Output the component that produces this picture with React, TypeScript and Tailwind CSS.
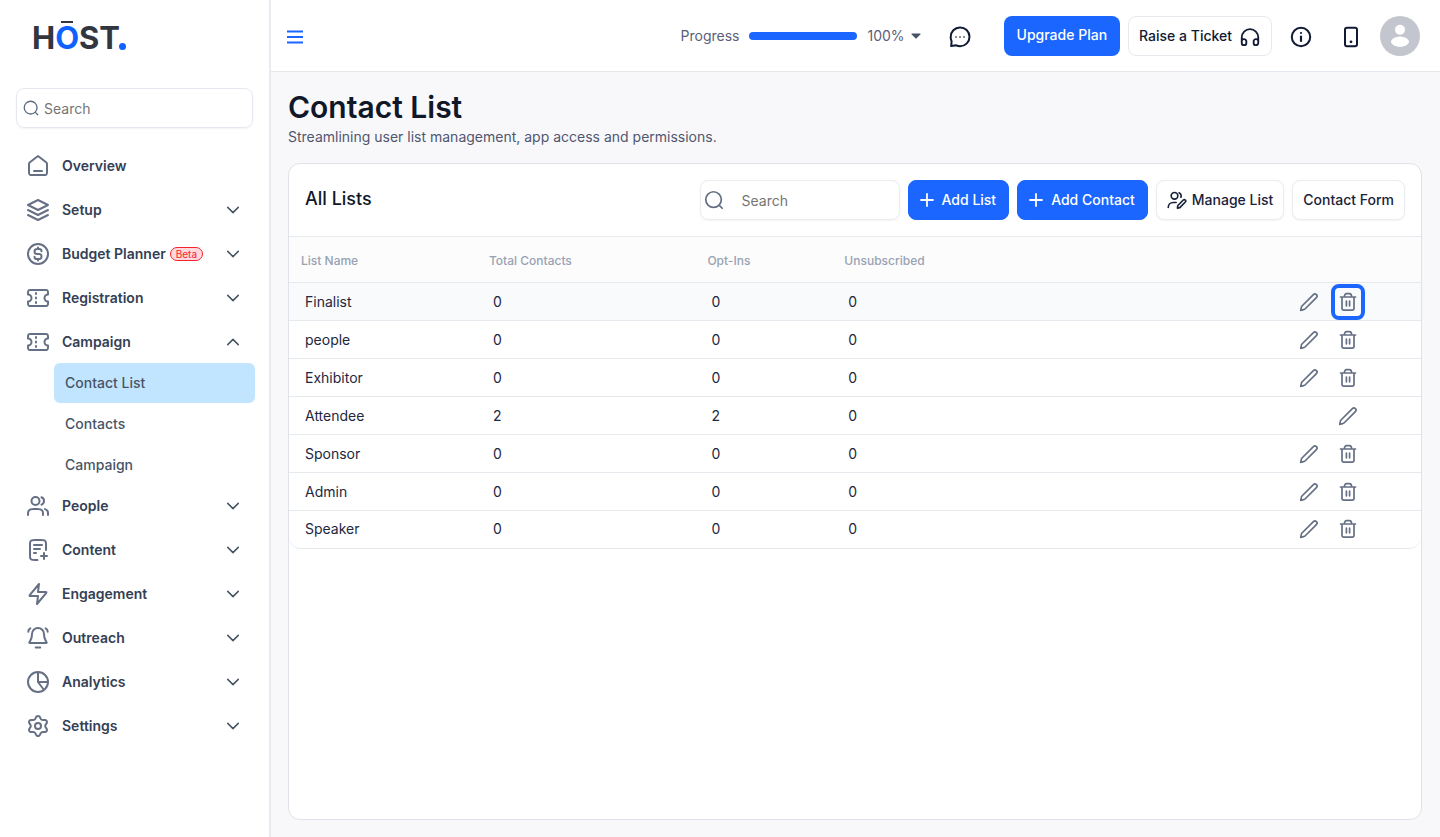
import React, { FC, ReactNode, SVGProps } from "react";

import clsx from "clsx";

const Icon: FC<SVGProps<SVGSVGElement>> = ({ children, ...rest }) => (
  <svg
    viewBox="0 0 24 24"
    fill="none"
    stroke="currentColor"
    strokeWidth={2}
    strokeLinecap="round"
    strokeLinejoin="round"
    aria-hidden="true"
    {...rest}
  >
    {children}
  </svg>
);

const paths = {
  home: "M8 17H16M11.0177 2.764L4.23539 8.03912C3.78202 8.39175 3.55534 8.56806 3.39203 8.78886C3.24737 8.98444 3.1396 9.20478 3.07403 9.43905C3 9.70352 3 9.9907 3 10.5651V17.8C3 18.9201 3 19.4801 3.21799 19.908C3.40973 20.2843 3.71569 20.5903 4.09202 20.782C4.51984 21 5.07989 21 6.2 21H17.8C18.9201 21 19.4802 21 19.908 20.782C20.2843 20.5903 20.5903 20.2843 20.782 19.908C21 19.4801 21 18.9201 21 17.8V10.5651C21 9.9907 21 9.70352 20.926 9.43905C20.8604 9.20478 20.7526 8.98444 20.608 8.78886C20.4447 8.56806 20.218 8.39175 19.7646 8.03913L12.9823 2.764C12.631 2.49075 12.4553 2.35412 12.2613 2.3016C12.0902 2.25526 11.9098 2.25526 11.7387 2.3016C11.5447 2.35412 11.369 2.49075 11.0177 2.764Z",
  layers: "M12 2L2 7L12 12L22 7L12 2ZM2 12L12 17L22 12M2 17L12 22L22 17",
  dollar:
    "M8.5 14.6667C8.5 15.9553 9.54467 17 10.8333 17H13C14.3807 17 15.5 15.8807 15.5 14.5C15.5 13.1193 14.3807 12 13 12H11C9.61929 12 8.5 10.8807 8.5 9.5C8.5 8.11929 9.61929 7 11 7H13.1667C14.4553 7 15.5 8.04467 15.5 9.33333M12 5.5V7M12 17V18.5M22 12A10 10 0 1 1 2 12A10 10 0 1 1 22 12Z",
  ticket:
    "M10 8V7M10 12.5V11.5M10 17V16M5.2 4H18.8C19.9201 4 20.4802 4 20.908 4.21799C21.2843 4.40973 21.5903 4.71569 21.782 5.09202C22 5.51984 22 6.0799 22 7.2V8.5C20.067 8.5 18.5 10.067 18.5 12C18.5 13.933 20.067 15.5 22 15.5V16.8C22 17.9201 22 18.4802 21.782 18.908C21.5903 19.2843 21.2843 19.5903 20.908 19.782C20.4802 20 19.9201 20 18.8 20H5.2C4.0799 20 3.51984 20 3.09202 19.782C2.71569 19.5903 2.40973 19.2843 2.21799 18.908C2 18.4802 2 17.9201 2 16.8V15.5C3.933 15.5 5.5 13.933 5.5 12C5.5 10.067 3.933 8.5 2 8.5V7.2C2 6.0799 2 5.51984 2.21799 5.09202C2.40973 4.71569 2.71569 4.40973 3.09202 4.21799C3.51984 4 4.0799 4 5.2 4Z",
  users:
    "M22 21V19C22 17.1362 20.7252 15.5701 19 15.126M15.5 3.29076C16.9659 3.88415 18 5.32131 18 7C18 8.67869 16.9659 10.1159 15.5 10.7092M17 21C17 19.1362 17 18.2044 16.6955 17.4693C16.2895 16.4892 15.5108 15.7105 14.5307 15.3045C13.7956 15 12.8638 15 11 15H8C6.13623 15 5.20435 15 4.46927 15.3045C3.48915 15.7105 2.71046 16.4892 2.30448 17.4693C2 18.2044 2 19.1362 2 21M13.5 7C13.5 9.20914 11.7091 11 9.5 11C7.29086 11 5.5 9.20914 5.5 7C5.5 4.79086 7.29086 3 9.5 3C11.7091 3 13.5 4.79086 13.5 7Z",
  filePlus:
    "M20 12V6.8C20 5.11984 20 4.27976 19.673 3.63803C19.3854 3.07354 18.9265 2.6146 18.362 2.32698C17.7202 2 16.8802 2 15.2 2H8.8C7.11984 2 6.27976 2 5.63803 2.32698C5.07354 2.6146 4.6146 3.07354 4.32698 3.63803C4 4.27976 4 5.11984 4 6.8V17.2C4 18.8802 4 19.7202 4.32698 20.362C4.6146 20.9265 5.07354 21.3854 5.63803 21.673C6.27976 22 7.11984 22 8.8 22H11.5M14 11H8M10 15H8M16 7H8M18 21V15M15 18H21",
  zap: "M13 2L4.09344 12.6879C3.74463 13.1064 3.57023 13.3157 3.56756 13.4925C3.56524 13.6461 3.63372 13.7923 3.75324 13.8889C3.89073 14 4.16316 14 4.70802 14H12L11 22L19.9065 11.3121C20.2553 10.8936 20.4297 10.6843 20.4324 10.5075C20.4347 10.3539 20.3663 10.2077 20.2467 10.1111C20.1092 10 19.8368 10 19.292 10H12L13 2Z",
  bell: "M9.7 21.4H14.3M2.29414 5.81989C2.27979 4.36854 3.06227 3.01325 4.32635 2.3M21.7024 5.8199C21.7167 4.36855 20.9342 3.01325 19.6702 2.3M18 8C18 6.4087 17.3679 4.88258 16.2427 3.75736C15.1174 2.63214 13.5913 2 12 2C10.4087 2 8.88258 2.63214 7.75736 3.75736C6.63214 4.88258 6 6.4087 6 8C6 11.0902 5.22047 13.206 4.34966 14.6054C3.61513 15.7859 3.24786 16.3761 3.26132 16.5408C3.27624 16.7231 3.31486 16.7926 3.46178 16.9016C3.59446 17 4.19259 17 5.38885 17H18.6112C19.8074 17 20.4056 17 20.5382 16.9016C20.6851 16.7926 20.7238 16.7231 20.7387 16.5408C20.7521 16.3761 20.3849 15.7859 19.6503 14.6054C18.7795 13.206 18 11.0902 18 8Z",
  pie: "M12 2V12H22M12 12L18 20M22 12A10 10 0 1 1 2 12A10 10 0 1 1 22 12Z",
  settings:
    "M9.39504 19.3711L9.97949 20.6856C10.1532 21.0768 10.4368 21.4093 10.7957 21.6426C11.1547 21.8759 11.5736 22.0001 12.0017 22C12.4298 22.0001 12.8488 21.8759 13.2077 21.6426C13.5667 21.4093 13.8502 21.0768 14.0239 20.6856L14.6084 19.3711C14.8164 18.9047 15.1664 18.5159 15.6084 18.26C16.0532 18.0034 16.5678 17.8941 17.0784 17.9478L18.5084 18.1C18.9341 18.145 19.3637 18.0656 19.7451 17.8713C20.1265 17.6771 20.4434 17.3763 20.6573 17.0056C20.8715 16.635 20.9735 16.2103 20.9511 15.7829C20.9286 15.3555 20.7825 14.9438 20.5306 14.5978L19.6839 13.4344C19.3825 13.0171 19.2214 12.5148 19.2239 12C19.2238 11.4866 19.3864 10.9864 19.6884 10.5711L20.535 9.40778C20.787 9.06175 20.933 8.65007 20.9555 8.22267C20.978 7.79528 20.8759 7.37054 20.6617 7C20.4478 6.62923 20.1309 6.32849 19.7495 6.13423C19.3681 5.93997 18.9386 5.86053 18.5128 5.90556L17.0828 6.05778C16.5722 6.11141 16.0576 6.00212 15.6128 5.74556C15.1699 5.48825 14.8199 5.09736 14.6128 4.62889L14.0239 3.31444C13.8502 2.92317 13.5667 2.59072 13.2077 2.3574C12.8488 2.12408 12.4298 1.99993 12.0017 2C11.5736 1.99993 11.1547 2.12408 10.7957 2.3574C10.4368 2.59072 10.1532 2.92317 9.97949 3.31444L9.39504 4.62889C9.18797 5.09736 8.83792 5.48825 8.39504 5.74556C7.95026 6.00212 7.43571 6.11141 6.92504 6.05778L5.49059 5.90556C5.06484 5.86053 4.63528 5.93997 4.25388 6.13423C3.87248 6.32849 3.55563 6.62923 3.34171 7C3.12753 7.37054 3.02549 7.79528 3.04798 8.22267C3.07046 8.65007 3.2165 9.06175 3.46838 9.40778L4.31504 10.5711C4.61698 10.9864 4.77958 11.4866 4.77949 12C4.77958 12.5134 4.61698 13.0137 4.31504 13.4289L3.46838 14.5922C3.2165 14.9382 3.07046 15.3499 3.04798 15.7773C3.02549 16.2047 3.12753 16.6295 3.34171 17C3.55584 17.3706 3.87274 17.6712 4.25411 17.8654C4.63548 18.0596 5.06496 18.1392 5.49059 18.0944L6.92059 17.9422C7.43127 17.8886 7.94581 17.9979 8.39059 18.2544C8.83513 18.511 9.18681 18.902 9.39504 19.3711ZM15 12A3 3 0 1 1 9 12A3 3 0 1 1 15 12Z",
  search: "M21 21L17.5 17.5M20 11.5A8.5 8.5 0 1 1 3 11.5A8.5 8.5 0 1 1 20 11.5Z",
  plus: "M12 4V20M4 12H20",
  userEdit:
    "M1.5 21C1.5 17.5 4.1 15 7.5 15H11M14.5 3.3C16 3.9 17 5.3 17 7C17 7.6 16.9 8.1 16.7 8.6M13 7A4 4 0 1 1 5 7A4 4 0 1 1 13 7ZM12.5 21.7L13 18.6L19.6 12A1.7 1.7 0 0 1 22 14.4L15.4 21.1L12.5 21.7Z",
};

type IconName = keyof typeof paths;

const nav: { label: string; icon: IconName; beta?: boolean; items?: string[] }[] = [
  { label: "Overview", icon: "home" },
  { label: "Setup", icon: "layers" },
  { label: "Budget Planner", icon: "dollar", beta: true },
  { label: "Registration", icon: "ticket" },
  {
    label: "Campaign",
    icon: "ticket",
    items: ["Contact List", "Contacts", "Campaign"],
  },
  { label: "People", icon: "users" },
  { label: "Content", icon: "filePlus" },
  { label: "Engagement", icon: "zap" },
  { label: "Outreach", icon: "bell" },
  { label: "Analytics", icon: "pie" },
  { label: "Settings", icon: "settings" },
];

const lists = [
  { name: "Finalist", total: 0, optIns: 0, unsubscribed: 0 },
  { name: "people", total: 0, optIns: 0, unsubscribed: 0 },
  { name: "Exhibitor", total: 0, optIns: 0, unsubscribed: 0 },
  { name: "Attendee", total: 2, optIns: 2, unsubscribed: 0, locked: true },
  { name: "Sponsor", total: 0, optIns: 0, unsubscribed: 0 },
  { name: "Admin", total: 0, optIns: 0, unsubscribed: 0 },
  { name: "Speaker", total: 0, optIns: 0, unsubscribed: 0 },
];

const Logo: FC = () => (
  <a
    href="#"
    className="flex items-end pl-4 text-[31px] leading-10 font-bold text-[#32363f]"
  >
    H
    <span className="relative text-[#0f62fe]">
      O
      <span className="absolute top-[3px] left-1/2 h-0.5 w-3 -translate-x-1/2 bg-[#32363f]" />
    </span>
    ST
    <span className="mb-2 -ml-px size-[7px] rounded-full bg-[#0f62fe]" />
  </a>
);

const Sidebar: FC = () => (
  <aside className="w-[271px] shrink-0 border-r-2 border-[#eaebf1] bg-white px-4 pt-[18px]">
    <Logo />

    <label className="mt-[30px] flex h-10 items-center gap-1 rounded-lg border border-[#e6e8ef] pr-2 pl-[5px] shadow-xs">
      <Icon className="size-[18px] shrink-0 text-[#5f6b82]" strokeWidth={1.8}>
        <path d={paths.search} />
      </Icon>
      <input
        type="text"
        aria-label="Search menu"
        placeholder="Search"
        className="w-full min-w-0 pt-0.5 text-sm outline-none placeholder:text-[#757575]"
      />
    </label>

    <nav className="mt-4">
      <ul>
        {nav.map(({ label, icon, beta, items }) => (
          <li key={label}>
            <button
              type="button"
              className="flex h-11 w-full items-center pr-[11px] pl-2.5 text-sm font-semibold text-[#344054]"
            >
              <Icon className="mr-3 size-6 text-[#667085]">
                <path d={paths[icon]} />
              </Icon>
              {label}
              {beta && (
                <span className="ml-1 rounded-full border border-[#f5222d] bg-[#ffd9dc] px-[5px] text-[10px] leading-3 font-normal text-[#f5222d]">
                  Beta
                </span>
              )}
              {label !== "Overview" && (
                <Icon
                  className={clsx(
                    "ml-auto size-[18px] text-[#475467]",
                    items && "rotate-180"
                  )}
                >
                  <path d="M5 8.5L12 15.5L19 8.5" />
                </Icon>
              )}
            </button>

            {items && (
              <ul className="-my-px -mr-0.5 ml-[38px] flex flex-col gap-px">
                {items.map((item) => (
                  <li key={item}>
                    <a
                      href="#"
                      className={clsx(
                        "flex h-10 items-center rounded-md px-[11px] text-sm font-medium text-[#475467]",
                        item === "Contact List" && "bg-[#c2e5ff]"
                      )}
                    >
                      {item}
                    </a>
                  </li>
                ))}
              </ul>
            )}
          </li>
        ))}
      </ul>
    </nav>
  </aside>
);

const Header: FC = () => (
  <header className="relative flex h-[72px] shrink-0 items-center border-b border-[#e6e8ec] bg-white pr-5 pl-4 text-[#101a33]">
    <button type="button" aria-label="Toggle menu" className="pt-0.5 text-[#1a66ff]">
      <svg viewBox="0 0 16 14" className="h-3.5 w-4" fill="currentColor">
        <path d="M0 0.5H16V2.5H0ZM0 6H16V8H0ZM0 11.5H16V13.5H0Z" />
      </svg>
    </button>

    <button
      type="button"
      className="ml-auto flex items-center gap-2.5 text-sm text-[#5a6077]"
    >
      Progress
      <span className="h-2 w-[108px] rounded-full bg-[#1a66ff]" />
      <span className="flex items-center gap-1.5">
        100%
        <svg viewBox="0 0 10 6" className="h-1.5 w-2.5" fill="#475467">
          <path d="M1 0.5H9Q10 0.7 9.3 1.5L5.6 5.2Q5 5.7 4.4 5.2L0.7 1.5Q0 0.7 1 0.5Z" />
        </svg>
      </span>
    </button>

    <button type="button" aria-label="Messages" className="ml-[27px] pt-0.5">
      <Icon className="size-6">
        <path d="M3.2 21L3.6 16.2C2.9 14.9 2.6 13.4 2.7 12A9.4 9.4 0 1 1 12.2 21.2C10.8 21.2 9.4 20.9 8.3 20.3L3.2 21Z" />
        <path d="M8 12H8.01M12 12H12.01M16 12H16.01" strokeOpacity={0.65} />
      </Icon>
    </button>

    <button
      type="button"
      className="ml-8 h-10 rounded-lg bg-[#1a66ff] px-[13px] pb-0.5 text-sm font-medium text-white"
    >
      Upgrade Plan
    </button>
    <button
      type="button"
      className="ml-2 flex h-10 items-center gap-[7px] rounded-lg border border-[#e6e9ee] px-2.5 text-sm font-medium"
    >
      Raise a Ticket
      <Icon className="size-[22px]">
        <path d="M3 19V13.5A9 9 0 0 1 21 13.5V19M3 18.5A2.5 2.5 0 0 1 8 17.5V19.5A2.5 2.5 0 0 1 3 19.5ZM21 18.5A2.5 2.5 0 0 0 16 17.5V19.5A2.5 2.5 0 0 0 21 19.5Z" />
      </Icon>
    </button>
    <button type="button" aria-label="Information" className="ml-[17px] pt-0.5">
      <Icon className="size-6">
        <circle cx="12" cy="12" r="9.2" />
        <path d="M12 11.5V16" strokeWidth={2.2} />
        <path d="M12 8H12.01" strokeWidth={2.2} />
      </Icon>
    </button>
    <button type="button" aria-label="Mobile app" className="ml-[26px] pt-0.5">
      <Icon className="size-6">
        <rect x="6" y="2.8" width="12" height="18.4" rx="2" />
        <path d="M12 16.8H12.01" strokeWidth={2.8} />
      </Icon>
    </button>
    <button type="button" aria-label="Account" className="ml-[17px]">
      <svg viewBox="0 0 40 40" className="size-10">
        <circle cx="20" cy="20" r="20" fill="#c4c6cf" />
        <circle cx="20" cy="13.7" r="5" fill="#fff" />
        <path
          d="M20 20.6C25 20.6 29 23.5 29 25.7C29 28 25 30.8 20 30.8C15 30.8 11 28 11 25.7C11 23.5 15 20.6 20 20.6Z"
          fill="#fff"
        />
      </svg>
    </button>

    {/* collapsed account menu */}
    <div className="absolute top-full right-7 h-px w-60 bg-[#e4e9ef]" />
  </header>
);

const ActionButton: FC<{ icon?: IconName; primary?: boolean; children: ReactNode }> = ({
  icon,
  primary,
  children,
}) => (
  <button
    type="button"
    className={clsx(
      "flex h-10 items-center rounded-lg border text-sm font-medium whitespace-nowrap",
      primary
        ? "gap-1.5 border-[#1a66ff] bg-[#1a66ff] pr-3 pl-[9px] text-white"
        : "gap-[5px] border-[#eaecf0] bg-white px-2.5 text-[#182239] shadow-xs"
    )}
  >
    {icon && (
      <Icon
        className={primary ? "size-[18px]" : "size-5"}
        strokeWidth={primary ? 2.4 : 2}
      >
        <path d={paths[icon]} />
      </Icon>
    )}
    {children}
  </button>
);

const ListTable: FC = () => (
  <div className="overflow-hidden rounded-b-xl border-b border-[#e6e9ee]">
    <table className="w-full table-fixed text-left text-sm text-[#1d2740]">
      <thead>
        <tr className="h-[46px] border-y border-[#e6e9ee] bg-[#fcfcfc] text-xs text-[#98a2b3]">
          <th className="w-[16.6%] px-3 pt-0.5 font-medium">List Name</th>
          <th className="w-[19.3%] px-3 pt-0.5 font-medium">Total Contacts</th>
          <th className="w-[12.1%] px-3 pt-0.5 font-medium">Opt-Ins</th>
          <th className="px-3 pt-0.5 font-medium">Unsubscribed</th>
          <th className="px-3" aria-label="Actions" />
        </tr>
      </thead>
      <tbody>
        {lists.map((list, index) => (
          <tr
            key={list.name}
            className={clsx(
              "h-[38px] border-b border-[#e6e9ee] last:h-[37px] last:border-b-0",
              index === 0 && "bg-[#f9fafb]"
            )}
          >
            <td className="px-4">{list.name}</td>
            <td className="px-4">{list.total}</td>
            <td className="px-4">{list.optIns}</td>
            <td className="px-4">{list.unsubscribed}</td>
            <td className="pr-14">
              <div className="flex justify-end gap-[5px] text-[#667085]">
                <button
                  type="button"
                  aria-label={`Edit ${list.name}`}
                  className="flex h-9 w-[34px] items-center justify-center"
                >
                  <Icon viewBox="0 0 20 20" className="size-5" strokeWidth={1.7}>
                    <path d="M1.7 18.3L2.3 15.4C2.4 14.8 2.6 14.4 3 14L14.4 2.6A2.05 2.05 0 0 1 17.4 5.6L6 17C5.6 17.4 5.2 17.6 4.6 17.7L1.7 18.3Z" />
                  </Icon>
                </button>
                {!list.locked && (
                  <button
                    type="button"
                    aria-label={`Delete ${list.name}`}
                    className={clsx(
                      "flex h-9 w-[34px] items-center justify-center",
                      index === 0 && "rounded-lg border-4 border-[#1a66ff]"
                    )}
                  >
                    <Icon
                      viewBox="0 0 20 20"
                      className="size-5 shrink-0"
                      strokeWidth={1.7}
                    >
                      <path d="M2.5 5H17.5M4 5V16.3Q4 18.2 5.9 18.2H14.1Q16 18.2 16 16.3V5M6.4 4.8C6.4 2.6 7.3 1.7 8.6 1.7H11.4C12.7 1.7 13.6 2.6 13.6 4.8M8.4 9.2V13.8M11.6 9.2V13.8" />
                    </Icon>
                  </button>
                )}
              </div>
            </td>
          </tr>
        ))}
      </tbody>
    </table>
  </div>
);

const App: FC = () => (
  <div className="flex min-h-screen bg-[#f8f8fb] font-[Inter,sans-serif]">
    <Sidebar />

    <div className="flex min-w-0 flex-1 flex-col">
      <Header />

      <main className="flex flex-1 flex-col pt-[17px] pr-[18px] pb-[17px] pl-[17px]">
        <h1 className="text-3xl leading-9 font-semibold text-[#101828]">
          Contact List
        </h1>
        <p className="mt-0.5 text-sm text-[#51566f]">
          Streamlining user list management, app access and permissions.
        </p>

        <section className="mt-4 flex-1 rounded-xl border border-[#dfe2e8] bg-white">
          <div className="flex h-[72px] items-center gap-2 px-4">
            <h2 className="mr-auto pb-0.5 text-lg font-medium text-[#101828]">
              All Lists
            </h2>
            <label className="flex h-10 w-[200px] items-center gap-[17px] rounded-lg border border-[#eaecf0] px-0.5 shadow-xs">
              <Icon className="size-[22px] shrink-0 text-[#667085]" strokeWidth={1.9}>
                <path d={paths.search} />
              </Icon>
              <input
                type="text"
                aria-label="Search lists"
                placeholder="Search"
                className="w-full min-w-0 pt-0.5 text-sm outline-none placeholder:text-[#757575]"
              />
            </label>
            <ActionButton icon="plus" primary>
              Add List
            </ActionButton>
            <ActionButton icon="plus" primary>
              Add Contact
            </ActionButton>
            <ActionButton icon="userEdit">Manage List</ActionButton>
            <ActionButton>Contact Form</ActionButton>
          </div>

          <ListTable />
        </section>
      </main>
    </div>
  </div>
);

export default App;
